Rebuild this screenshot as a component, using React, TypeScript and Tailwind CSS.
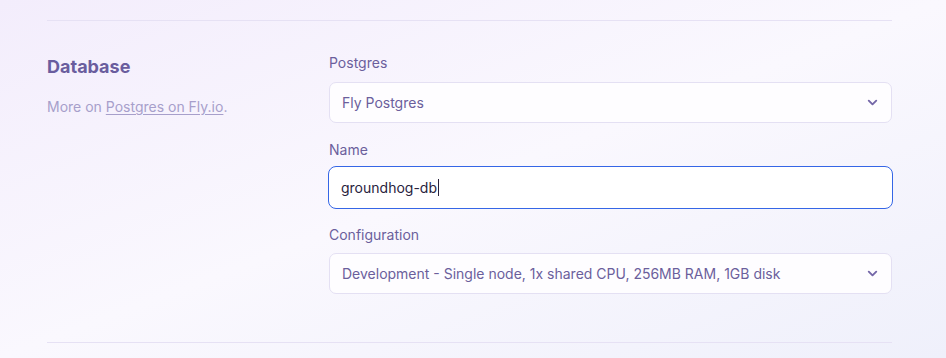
function Chevron() {
  return (
    <svg width="15" height="15" viewBox="0 0 24 24" fill="none" stroke="#7467a8" strokeWidth="3" strokeLinecap="round" strokeLinejoin="round">
      <path d="M6 9l6 6 6-6" />
    </svg>
  );
}

function Select({ value }: { value: string }) {
  return (
    <div className="flex h-[41px] items-center justify-between rounded-[7px] border border-[#e4e0f3] bg-[#fefdff] pl-3 pr-[11px] text-[14px] text-[#6b5f9c]">
      <span>{value}</span>
      <Chevron />
    </div>
  );
}

export default function App() {
  return (
    <div
      className="h-[358px] w-full overflow-hidden bg-gradient-to-br from-[#f3edfc] via-[#faf8fe] to-[#eff0fb] pl-[47px] pr-[54px] pt-5"
      style={{ fontFamily: "Inter, 'Noto Sans', sans-serif" }}
    >
      <div className="border-t border-[#e6e1f4]" />
      <div className="flex h-[322px] border-b border-[#e6e1f4]">
        <div className="w-[282px] shrink-0 pt-[34px]">
          <h2 className="text-[18px] leading-6 font-bold text-[#6a5d9e]">Database</h2>
          <p className="mt-[18px] text-[14px] leading-5 text-[#a79fcb]">
            More on <a href="#" className="underline underline-offset-2">Postgres on Fly.io</a>.
          </p>
        </div>
        <div className="flex-1 pt-[32px]">
          <label className="mb-[9px] block text-[14px] leading-5 text-[#6b5f9c]">Postgres</label>
          <Select value="Fly Postgres" />
          <label className="mb-[6px] mt-[17px] block text-[14px] leading-5 text-[#6b5f9c]">Name</label>
          <div className="-mx-px flex h-[43px] items-center rounded-[8px] border-[1.5px] border-[#3566e6] bg-white pl-3 text-[14px] text-[#29233d]">
            <span>groundhog-db</span>
            <span className="ml-px h-[17px] w-px bg-[#29233d]" />
          </div>
          <label className="mb-2 mt-4 block text-[14px] leading-5 text-[#6b5f9c]">Configuration</label>
          <Select value="Development - Single node, 1x shared CPU, 256MB RAM, 1GB disk" />
        </div>
      </div>
    </div>
  );
}
